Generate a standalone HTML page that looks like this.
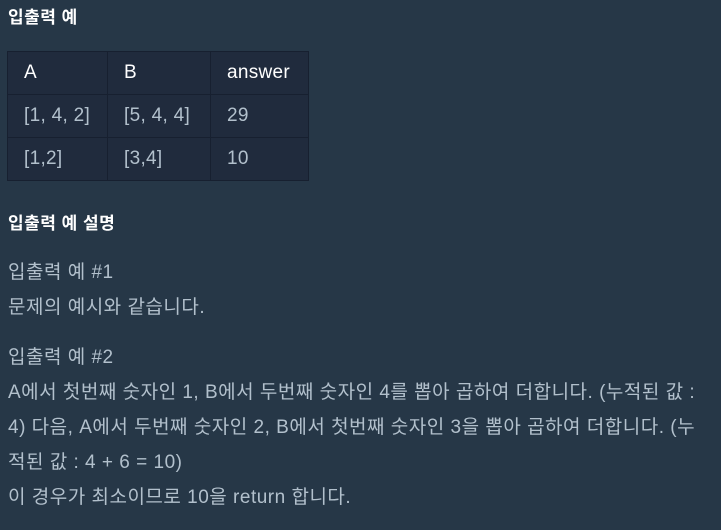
<!DOCTYPE html>
<html><head><meta charset="utf-8"><style>
body{margin:0;background:#263747;width:721px;height:530px;overflow:hidden;font-family:"Liberation Sans","Noto Sans CJK KR",sans-serif;color:#b2c0cc;}
.h{position:absolute;left:8px;color:#fff;font-weight:bold;font-size:17px;line-height:20px;letter-spacing:0.5px;}
table{position:absolute;left:7px;top:51px;border-collapse:collapse;background:#202b3d;font-size:19px;letter-spacing:0.3px;}
td{border:1px solid #172030;padding:0 0 0 16px;height:43px;box-sizing:border-box;}
tr:first-child td{color:#fff;}
.p{position:absolute;left:8px;font-size:19px;line-height:35px;white-space:nowrap;letter-spacing:0.5px;}
</style></head><body>
<div class="h" style="top:8px">입출력 예</div>
<table>
<tr><td style="width:100px">A</td><td style="width:103px">B</td><td style="width:98px">answer</td></tr>
<tr><td>[1, 4, 2]</td><td>[5, 4, 4]</td><td>29</td></tr>
<tr><td>[1,2]</td><td>[3,4]</td><td>10</td></tr>
</table>
<div class="h" style="top:214px">입출력 예 설명</div>
<div class="p" style="top:255px">입출력 예 #1<br>문제의 예시와 같습니다.</div>
<div class="p" style="top:340px">입출력 예 #2<br>A에서 첫번째 숫자인 1, B에서 두번째 숫자인 4를 뽑아 곱하여 더합니다. (누적된 값 :<br>4) 다음, A에서 두번째 숫자인 2, B에서 첫번째 숫자인 3을 뽑아 곱하여 더합니다. (누<br>적된 값 : 4 + 6 = 10)<br>이 경우가 최소이므로 10을 return 합니다.</div>
</body></html>
